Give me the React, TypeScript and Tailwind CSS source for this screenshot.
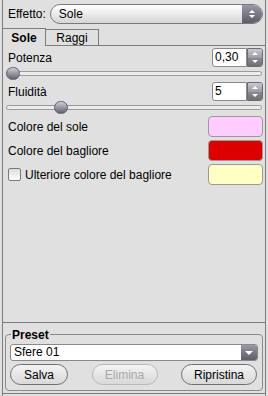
function Spin({ value }: { value: string }) {
  return (
    <div className="flex h-[19px] w-[51px]">
      <div className="flex-1 bg-white border border-[#8a8a8a] rounded-l-[3px] pl-[2px] text-[12px] leading-[17px] text-black">
        {value}
      </div>
      <div className="w-[16px] flex flex-col rounded-r-[3px] overflow-hidden border border-[#6c6c6c]">
        <div className="flex-1 bg-gradient-to-b from-[#c9c9cf] to-[#9a9aa4] flex items-center justify-center">
          <div className="w-0 h-0 border-l-[3px] border-r-[3px] border-b-[3px] border-l-transparent border-r-transparent border-b-white" />
        </div>
        <div className="flex-1 bg-gradient-to-b from-[#8a8a94] to-[#6e6e78] flex items-center justify-center">
          <div className="w-0 h-0 border-l-[3px] border-r-[3px] border-t-[3px] border-l-transparent border-r-transparent border-t-white" />
        </div>
      </div>
    </div>
  )
}

function Slider({ pos }: { pos: number }) {
  return (
    <div className="relative h-[12px] mx-[3px]">
      <div className="absolute left-0 right-0 top-[4px] h-[5px] rounded-full border border-[#9a9a9a] bg-[#ececec]" />
      <div
        className="absolute top-0 w-[14px] h-[13px] rounded-full bg-gradient-to-b from-[#cfcfd6] to-[#646472] border border-[#5e5e6a]"
        style={{ left: pos }}
      />
    </div>
  )
}

function Swatch({ color }: { color: string }) {
  return <div className={`w-[55px] h-[21px] rounded-[4px] border border-[#9a9a9a] ${color}`} />
}

function Btn({ label, disabled }: { label: string; disabled?: boolean }) {
  return (
    <div
      className={`h-[21px] rounded-full border flex items-center justify-center bg-gradient-to-b from-[#f4f4f4] to-[#d8d8d8] text-[12px] ${
        disabled ? 'border-[#b8b8b8] text-[#a8a8a8]' : 'border-[#6f6f6f] text-black'
      }`}
    >
      {label}
    </div>
  )
}

export default function App() {
  return (
    <div
      className="w-[268px] h-[396px] bg-[#e0e0e0] px-[2px] text-black overflow-hidden"
      style={{ fontFamily: '"Liberation Sans", Arial, sans-serif' }}
    >
      <div className="h-full border-l border-r border-[#7c7c7c] flex flex-col">
        {/* effect picker */}
        <div className="flex items-center h-[27px] pl-[5px] pr-[2px] gap-[4px] text-[12px]">
          <span>Effetto:</span>
          <div className="flex-1 flex h-[20px] rounded-full border border-[#7a7a7a] overflow-hidden bg-gradient-to-b from-white to-[#d6d6d6]">
            <div className="flex-1 pl-[8px] leading-[18px]">Sole</div>
            <div className="w-[20px] bg-gradient-to-b from-[#9a9aa6] to-[#5c5c6a] flex flex-col items-center justify-center gap-[2px]">
              <div className="w-0 h-0 border-l-[3px] border-r-[3px] border-b-[3px] border-l-transparent border-r-transparent border-b-white" />
              <div className="w-0 h-0 border-l-[3px] border-r-[3px] border-t-[3px] border-l-transparent border-r-transparent border-t-white" />
            </div>
          </div>
        </div>

        {/* tabs */}
        <div className="flex h-[18px] mt-[1px] text-[12px]">
          <div className="w-[43px] border-t border-r border-[#7c7c7c] flex items-center justify-center font-bold bg-[#e0e0e0]">
            Sole
          </div>
          <div className="w-[53px] mt-[1px] border-t border-r border-b border-[#7c7c7c] flex items-center justify-center">
            Raggi
          </div>
          <div className="flex-1 border-b border-[#7c7c7c]" />
        </div>

        {/* tab body */}
        <div className="h-[277px] border-b border-[#7c7c7c] pt-[2px] text-[12px]">
          <div className="flex items-center justify-between pl-[5px] pr-[2px] h-[19px]">
            <span>Potenza</span>
            <Spin value="0,30" />
          </div>
          <Slider pos={0} />
          <div className="flex items-center justify-between pl-[5px] pr-[2px] h-[19px] mt-[3px]">
            <span>Fluidità</span>
            <Spin value="5" />
          </div>
          <Slider pos={48} />
          <div className="flex flex-col gap-[3px] mt-[3px] pr-[2px]">
            <div className="flex items-center justify-between pl-[5px]">
              <span>Colore del sole</span>
              <Swatch color="bg-[#ffccff]" />
            </div>
            <div className="flex items-center justify-between pl-[5px]">
              <span>Colore del bagliore</span>
              <Swatch color="bg-[#dd0000]" />
            </div>
            <div className="flex items-center justify-between pl-[5px]">
              <span className="flex items-center gap-[4px]">
                <span className="w-[13px] h-[13px] border border-[#7a7a7a] bg-gradient-to-b from-[#dcdcdc] to-white rounded-[2px]" />
                Ulteriore colore del bagliore
              </span>
              <Swatch color="bg-[#ffffc4]" />
            </div>
          </div>
        </div>

        {/* presets */}
        <div className="mt-[11px] mx-[2px] border border-[#8a8a8a] rounded-[4px] px-[4px] pb-[5px] relative">
          <div className="absolute -top-[9px] left-[5px] px-[1px] bg-[#e0e0e0] text-[12px] font-bold">Preset</div>
          <div className="mt-[9px] flex h-[17px] border border-[#8a8a8a] rounded-[3px] overflow-hidden bg-white text-[12px]">
            <div className="flex-1 pl-[3px] leading-[15px]">Sfere 01</div>
            <div className="w-[16px] bg-gradient-to-b from-[#9a9aa6] to-[#5c5c6a] flex items-center justify-center">
              <div className="w-0 h-0 border-l-[4px] border-r-[4px] border-t-[4px] border-l-transparent border-r-transparent border-t-white" />
            </div>
          </div>
          <div className="mt-[3px] grid grid-cols-[58px_66px_76px] justify-between pr-[1px]">
            <Btn label="Salva" />
            <Btn label="Elimina" disabled />
            <Btn label="Ripristina" />
          </div>
        </div>
        <div className="mt-auto mb-[2px] border-b border-[#7c7c7c]" />
      </div>
    </div>
  )
}
